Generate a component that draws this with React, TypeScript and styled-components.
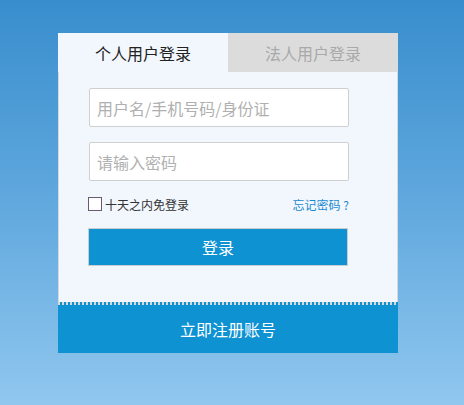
import React from "react";
import styled, { createGlobalStyle } from "styled-components";

const Global = createGlobalStyle`
  html, body { margin: 0; padding: 0; }
  body {
    width: 464px;
    height: 405px;
    overflow: hidden;
    background: linear-gradient(to bottom, #388ecd 0%, #5ca5dc 45%, #90c7ef 100%);
    font-family: "Noto Sans CJK SC", "Noto Sans", sans-serif;
  }
`;

const Page = styled.div`
  padding: 33px 0 0 58px;
`;

const Card = styled.div`
  width: 340px;
  display: flex;
  flex-direction: column;
`;

const Tabs = styled.div`
  display: flex;
  height: 39px;
`;

const Tab = styled.div<{ $active?: boolean }>`
  flex: 1;
  display: flex;
  align-items: center;
  justify-content: center;
  font-size: 16px;
  background: ${(p) => (p.$active ? "#f2f7fe" : "#dcdcdc")};
  color: ${(p) => (p.$active ? "#222" : "#a9a9a9")};
`;

const Body = styled.div`
  background: #f2f7fe;
  border-left: 1px solid #d6d9de;
  border-right: 1px solid #d6d9de;
  padding: 16px 0 36px 30px;
  display: flex;
  flex-direction: column;
`;

const Input = styled.input`
  box-sizing: border-box;
  width: 260px;
  height: 39px;
  border: 1px solid #cfcfcf;
  border-radius: 2px;
  background: #fff;
  padding: 0 7px;
  font-family: inherit;
  font-size: 16px;
  color: #333;
  margin-bottom: 15px;
  outline: none;
  &::placeholder { color: #b0b0b0; }
`;

const Row = styled.div`
  width: 260px;
  display: flex;
  align-items: center;
  justify-content: space-between;
  margin-top: 1px;
  height: 14px;
  margin-bottom: 17px;
`;

const Remember = styled.label`
  display: flex;
  align-items: center;
  font-size: 12px;
  color: #333;
  margin-left: -1px;
`;

const Box = styled.span`
  box-sizing: border-box;
  width: 14px;
  height: 14px;
  border: 1px solid #6a5a72;
  background: #fff;
  margin-right: 3px;
`;

const Forgot = styled.a`
  font-size: 12px;
  color: #1a8ad0;
  text-decoration: none;
  white-space: pre;
`;

const LoginBtn = styled.button`
  box-sizing: border-box;
  width: 260px;
  height: 38px;
  margin-left: -1px;
  background: #0e92d2;
  border: 1px solid #c9ccd0;
  color: #fff;
  font-family: inherit;
  font-size: 16px;
  padding: 0;
`;

const Dots = styled.div`
  height: 3px;
  background: repeating-linear-gradient(
    to right,
    #d8d8d8 0px,
    #d8d8d8 2px,
    #0e92d2 2px,
    #0e92d2 4px
  );
`;

const Register = styled.div`
  height: 48px;
  background: #0e92d2;
  color: #fff;
  font-size: 16px;
  display: flex;
  align-items: center;
  justify-content: center;
`;

export default function App() {
  return (
    <>
      <Global />
      <Page>
        <Card>
          <Tabs>
            <Tab $active>个人用户登录</Tab>
            <Tab>法人用户登录</Tab>
          </Tabs>
          <Body>
            <Input placeholder="用户名/手机号码/身份证" />
            <Input placeholder="请输入密码" type="password" />
            <Row>
              <Remember>
                <Box />
                十天之内免登录
              </Remember>
              <Forgot href="#">忘记密码 ?</Forgot>
            </Row>
            <LoginBtn>登录</LoginBtn>
          </Body>
          <Dots />
          <Register>立即注册账号</Register>
        </Card>
      </Page>
    </>
  );
}
